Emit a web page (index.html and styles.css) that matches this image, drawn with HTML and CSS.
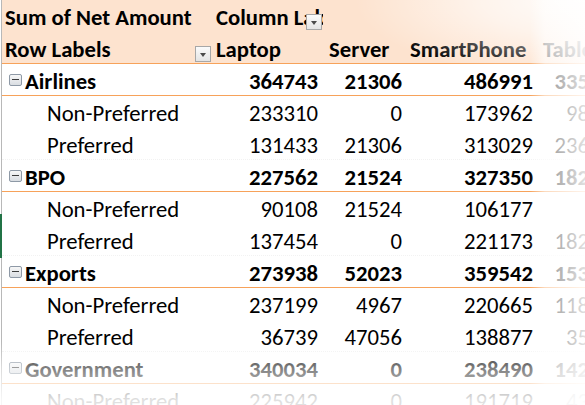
FILE: index.html
```html
<!DOCTYPE html>
<html>
<head>
<meta charset="utf-8">
<link rel="stylesheet" href="styles.css">
</head>
<body>
<div class="sheet">
  <div class="pivot">
    <div class="row hdr">
      <div class="c ca lbl">Sum of Net Amount</div>
      <div class="c cb hd drop">Column Labels<span class="dd"></span></div>
      <div class="c cc"></div>
      <div class="c cd"></div>
      <div class="c ce"></div>
    </div>
    <div class="row hdr hdr2">
      <div class="c ca lbl drop">Row Labels<span class="dd"></span></div>
      <div class="c cb hd">Laptop</div>
      <div class="c cc hd">Server</div>
      <div class="c cd hd">SmartPhone</div>
      <div class="c ce hd">Tablet</div>
    </div>

    <div class="row grp">
      <div class="c ca glbl"><span class="tog"></span>Airlines</div>
      <div class="c cb num">364743</div>
      <div class="c cc num">21306</div>
      <div class="c cd num">486991</div>
      <div class="c ce num">33512</div>
    </div>
    <div class="row">
      <div class="c ca sub">Non-Preferred</div>
      <div class="c cb num">233310</div>
      <div class="c cc num">0</div>
      <div class="c cd num">173962</div>
      <div class="c ce num">9871</div>
    </div>
    <div class="row last">
      <div class="c ca sub">Preferred</div>
      <div class="c cb num">131433</div>
      <div class="c cc num">21306</div>
      <div class="c cd num">313029</div>
      <div class="c ce num">23641</div>
    </div>

    <div class="row grp">
      <div class="c ca glbl"><span class="tog"></span>BPO</div>
      <div class="c cb num">227562</div>
      <div class="c cc num">21524</div>
      <div class="c cd num">327350</div>
      <div class="c ce num">18265</div>
    </div>
    <div class="row">
      <div class="c ca sub">Non-Preferred</div>
      <div class="c cb num">90108</div>
      <div class="c cc num">21524</div>
      <div class="c cd num">106177</div>
      <div class="c ce num"></div>
    </div>
    <div class="row last">
      <div class="c ca sub">Preferred</div>
      <div class="c cb num">137454</div>
      <div class="c cc num">0</div>
      <div class="c cd num">221173</div>
      <div class="c ce num">18265</div>
    </div>

    <div class="row grp">
      <div class="c ca glbl"><span class="tog"></span>Exports</div>
      <div class="c cb num">273938</div>
      <div class="c cc num">52023</div>
      <div class="c cd num">359542</div>
      <div class="c ce num">15347</div>
    </div>
    <div class="row">
      <div class="c ca sub">Non-Preferred</div>
      <div class="c cb num">237199</div>
      <div class="c cc num">4967</div>
      <div class="c cd num">220665</div>
      <div class="c ce num">11840</div>
    </div>
    <div class="row last">
      <div class="c ca sub">Preferred</div>
      <div class="c cb num">36739</div>
      <div class="c cc num">47056</div>
      <div class="c cd num">138877</div>
      <div class="c ce num">3507</div>
    </div>

    <div class="row grp">
      <div class="c ca glbl"><span class="tog"></span>Government</div>
      <div class="c cb num">340034</div>
      <div class="c cc num">0</div>
      <div class="c cd num">238490</div>
      <div class="c ce num">14206</div>
    </div>
    <div class="row">
      <div class="c ca sub">Non-Preferred</div>
      <div class="c cb num">225942</div>
      <div class="c cc num">0</div>
      <div class="c cd num">191719</div>
      <div class="c ce num">4318</div>
    </div>
  </div>
  <div class="sel"></div>
</div>
</body>
</html>
```
FILE: styles.css
```css
html, body {
  margin: 0;
  padding: 0;
  background: #fff;
  overflow: hidden;
}
body {
  width: 585px;
  height: 405px;
}
.sheet {
  position: relative;
  width: 585px;
  height: 405px;
  overflow: hidden;
  font-family: Carlito, Lato, "Liberation Sans", sans-serif;
  font-size: 22.7px;
  color: #000;
}
.pivot {
  margin-left: 1px;
  border-left: 1px solid #b8b8b8;
  width: 640px;
}
.row {
  display: grid;
  grid-template-columns: 210px 111px 83px 131px 80px;
  height: 32px;
  box-sizing: border-box;
}
.c {
  display: flex;
  align-items: center;
  white-space: nowrap;
  overflow: hidden;
  position: relative;
  padding-top: 2px;
}
.hdr {
  background: #fde3cf;
  font-weight: bold;
}
.hdr2, .grp {
  border-bottom: 1px solid #f7a25a;
}
.grp {
  font-weight: bold;
}
.last {
  border-bottom: 1px dotted #f2f2f2;
}
.lbl {
  padding-left: 3px;
}
.glbl {
  padding-left: 7px;
}
.sub {
  padding-left: 45px;
}
.num {
  justify-content: flex-end;
}
.hd.cb { padding-left: 4px; }
.hd.cc { padding-left: 6px; }
.hd.cd { padding-left: 4px; }
.hd.ce { padding-left: 6px; }
.num.cb { padding-right: 5px; }
.num.cc { padding-right: 4px; }
.num.cd { padding-right: 4px; }
.num.ce { padding-right: 5px; }

.tog {
  width: 13px;
  height: 12px;
  box-sizing: border-box;
  border: 1px solid #8e99a6;
  border-radius: 2px;
  background: linear-gradient(#f7f7f7, #d9dde2);
  margin-right: 3px;
  position: relative;
  flex: none;
  top: -1px;
}
.tog::after {
  content: "";
  position: absolute;
  left: 2px;
  right: 2px;
  top: 4px;
  height: 1px;
  background: #3c3c3c;
}
.dd {
  position: absolute;
  right: 1px;
  top: 14px;
  width: 16px;
  height: 16px;
  box-sizing: border-box;
  border: 1px solid #a7a7a7;
  background: linear-gradient(#fbfbfb, #e4e4e4);
}
.dd::after {
  content: "";
  position: absolute;
  left: 4px;
  top: 6px;
  border-left: 3px solid transparent;
  border-right: 3px solid transparent;
  border-top: 4px solid #4a4a4a;
}
.sel {
  position: absolute;
  left: 0;
  top: 214px;
  width: 2px;
  height: 44px;
  background: #217346;
}
.sheet::after {
  content: "";
  position: absolute;
  inset: 0;
  pointer-events: none;
  background:
    linear-gradient(to bottom, rgba(255,255,255,0) 342px, rgba(255,255,255,0.5) 368px, rgba(255,255,255,0.88) 400px),
    linear-gradient(to right, rgba(255,255,255,0) 530px, rgba(255,255,255,0.6) 545px, rgba(255,255,255,0.88) 585px),
    radial-gradient(ellipse 230px 80px at 100% 0, rgba(255,255,255,0.95) 0%, rgba(255,255,255,0.6) 45%, rgba(255,255,255,0) 100%);
}
```
